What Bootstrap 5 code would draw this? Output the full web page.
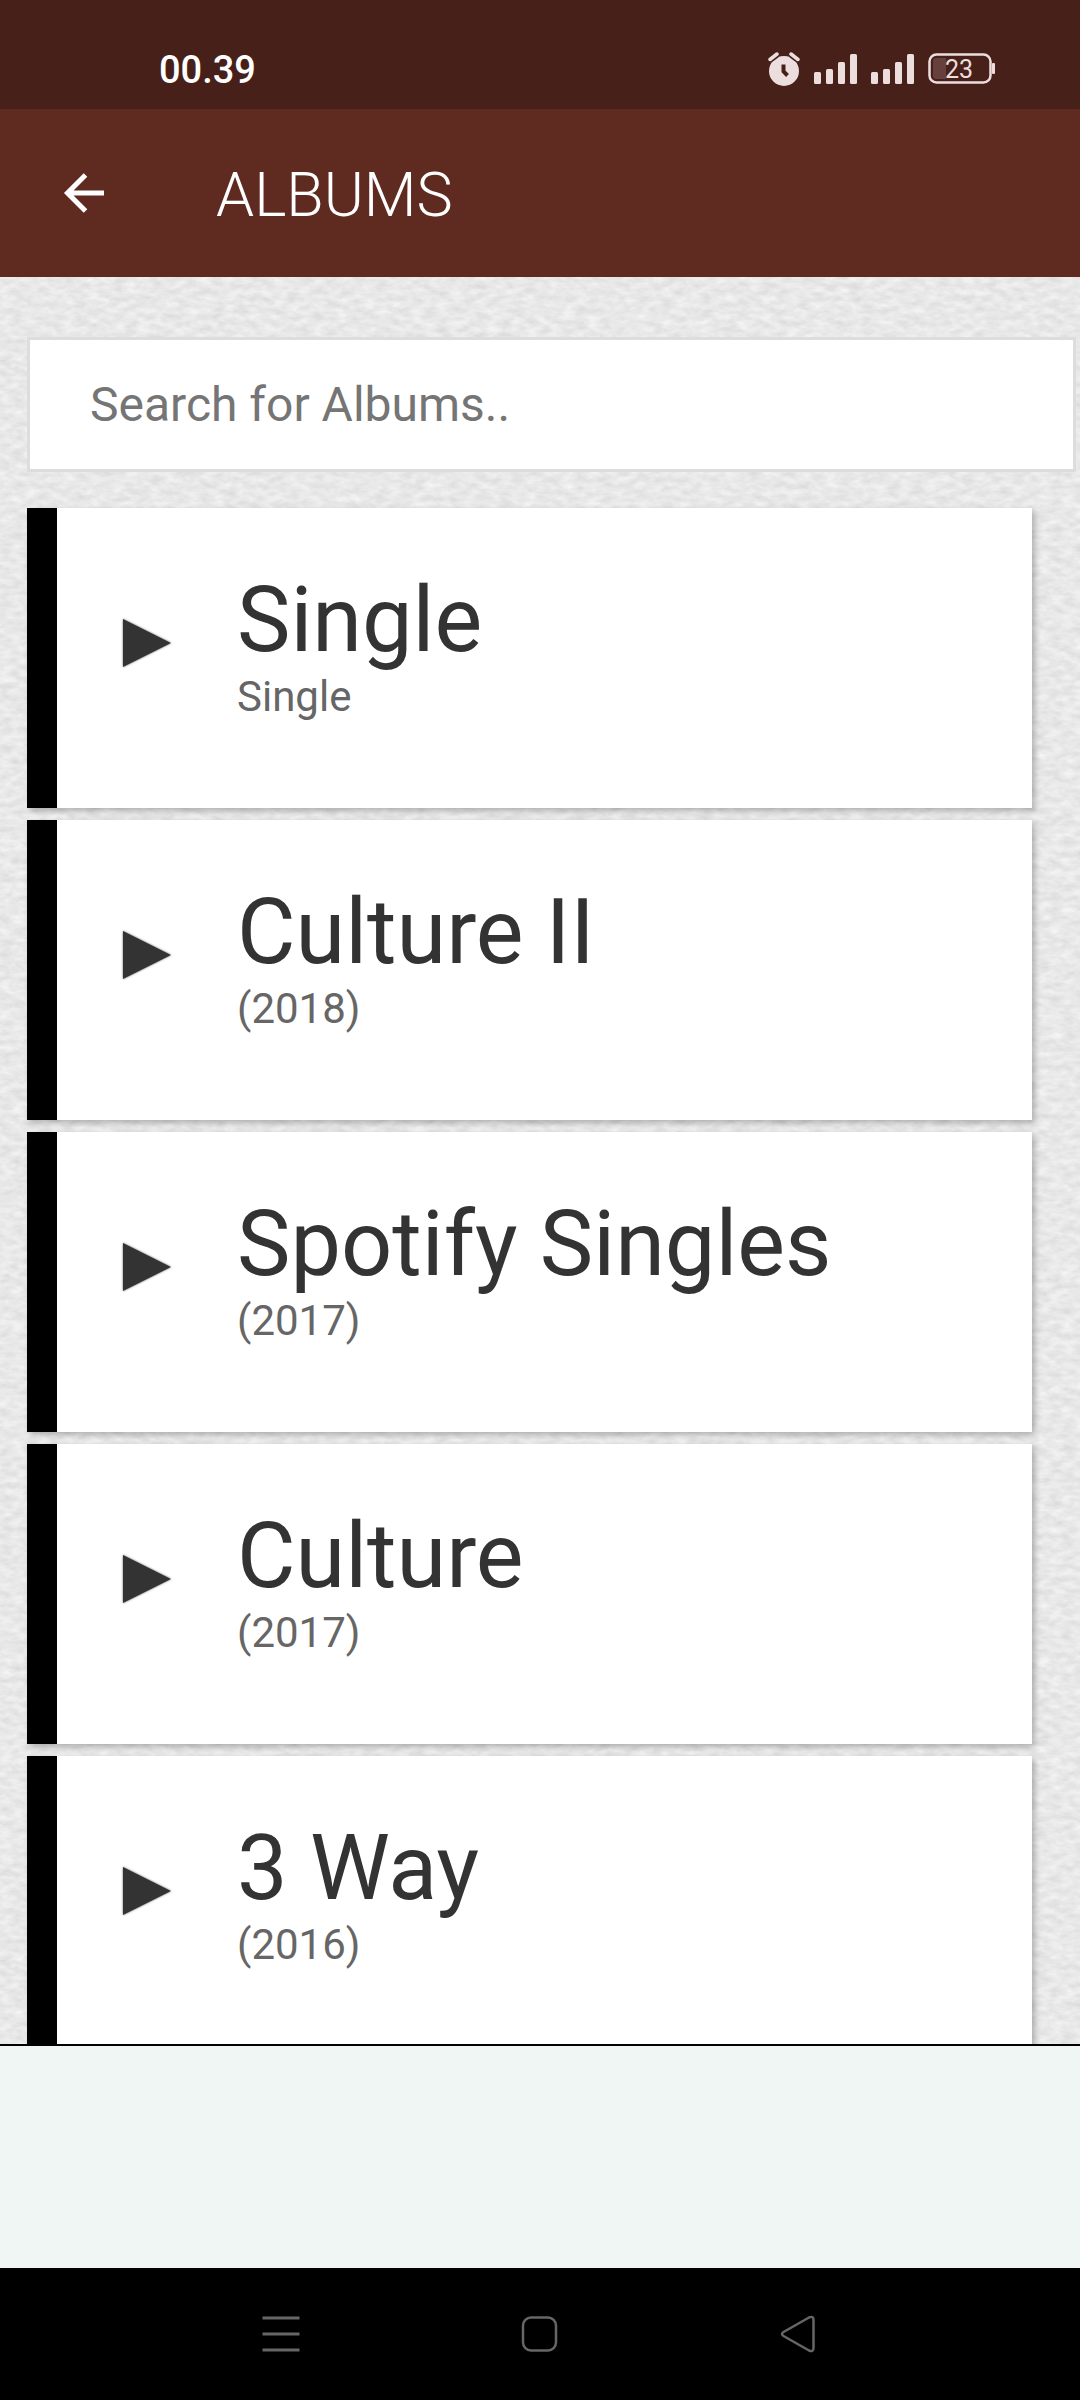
<!DOCTYPE html>
<html lang="en">
<head>
<meta charset="utf-8">
<meta name="viewport" content="width=device-width, initial-scale=1">
<title>Albums</title>
<link href="https://cdn.jsdelivr.net/npm/bootstrap@5.3.0/dist/css/bootstrap.min.css" rel="stylesheet">
<style>
  body { font-family: Roboto, "Liberation Sans", sans-serif; background: #f0f6f4; }
  .status-bar { height: 109px; padding: 28px 84px 0 159px; background: #48201a; }
  .clock { font-size: 38px; line-height: 84px; font-weight: 500; }
  .status-icons { gap: 14px; height: 82px; }
  .app-bar { height: 168px; padding: 0 60px; background: #5f2b20; }
  .back-link { width: 48px; margin-right: 108px; }
  .app-title { font-size: 61px; line-height: 72px; font-weight: 300; padding-top: 3px; }
  .content-area { background: #e7e7e7; border-bottom: 2px solid #000; padding: 60px 4px 0 27px; }
  .paper { z-index: 0; }
  .content-inner { z-index: 1; }
  .search-box { height: 135px; padding: 0 60px; border: 3px solid #ddd; font-size: 48px; color: #333; background: #fff; }
  .search-box::placeholder { color: #757575; opacity: 1; }
  .album-list { gap: 12px; margin-top: 36px; margin-right: 44px; }
  .album-card { min-height: 300px; padding: 61px 60px 87px 66px; gap: 66px; border-left: 30px solid #000; background: #fff; box-shadow: 3px 3px 6px rgba(0,0,0,.25); }
  .album-name { font-size: 90px; line-height: 104px; color: #333; }
  .album-year { font-size: 42px; line-height: 48px; color: #666; }
  .play-icon { margin-top: 50px; filter: drop-shadow(0 0 1px rgba(0,0,0,.6)); }
  .ad-strip { height: 222px; background: #f0f6f4; }
  .system-nav { height: 132px; padding: 0 249px 0 248px; background: #000; }
</style>
<script src="https://cdn.jsdelivr.net/npm/bootstrap@5.3.0/dist/js/bootstrap.bundle.min.js"></script>
</head>
<body class="vh-100 d-flex flex-column overflow-hidden">

<div class="status-bar d-flex justify-content-between flex-shrink-0 text-white">
  <div class="clock">00.39</div>
  <div class="status-icons d-flex align-items-center">
    <svg width="32" height="34" viewBox="0 0 32 34" fill="#ecdedd">
      <circle cx="16" cy="19" r="15"/>
      <path d="M2.500 7 8.500 2.500M23.500 2.500l6 4.500" stroke="#48201a" stroke-width="7"/>
      <path d="M2 7.500 9 2M23 2l7 5.500" stroke="#ecdedd" stroke-width="3.500" stroke-linecap="round"/>
      <path d="M15.500 12.500v7l4 4" fill="none" stroke="#48201a" stroke-width="4"/>
    </svg>
    <svg width="43" height="30" viewBox="0 0 43 30" fill="#ecdedd">
      <rect y="18" width="7" height="12" rx="1.500"/><rect x="12" y="15" width="7" height="15" rx="1.500"/><rect x="24" y="8" width="7" height="22" rx="1.500"/><rect x="36" width="7" height="30" rx="1.500"/>
    </svg>
    <svg width="43" height="30" viewBox="0 0 43 30" fill="#ecdedd">
      <rect y="18" width="7" height="12" rx="1.500"/><rect x="12" y="15" width="7" height="15" rx="1.500"/><rect x="24" y="8" width="7" height="22" rx="1.500"/><rect x="36" width="7" height="30" rx="1.500"/>
    </svg>
    <svg width="68" height="32" viewBox="0 0 68 32" fill="#ecdedd">
      <rect x="1.500" y="1.500" width="61" height="28" rx="7" fill="none" stroke="#ecdedd" stroke-width="2.500"/>
      <path d="M18 5H8q-3 0-3 3v15q0 3 3 3h10z" fill="#66403d"/>
      <rect x="64" y="10" width="3" height="11" rx="1"/>
      <text x="31" y="25" text-anchor="middle" font-size="25" font-weight="400" font-family="Roboto, sans-serif">23</text>
    </svg>
  </div>
</div>

<header class="app-bar d-flex align-items-center flex-shrink-0 text-white">
  <a href="#" class="back-link text-white d-flex" aria-label="Back">
    <svg width="48" height="48" viewBox="0 0 48 48" fill="none" stroke="#fff" stroke-width="5"><path d="M44 24H8M25.500 6 7.500 24l18 18"/></svg>
  </a>
  <h1 class="app-title m-0">ALBUMS</h1>
</header>

<main class="content-area position-relative flex-grow-1 overflow-hidden">
  <!-- paper grain behind the list -->
  <svg class="paper position-absolute top-0 start-0 w-100 h-100" aria-hidden="true">
    <filter id="grain" x="0" y="0" width="100%" height="100%" color-interpolation-filters="sRGB">
      <feTurbulence type="fractalNoise" baseFrequency="0.08 0.16" numOctaves="3" seed="7"/>
      <feColorMatrix values="0.13 0 0 0 0.845  0.13 0 0 0 0.845  0.13 0 0 0 0.845  0 0 0 0 1"/>
    </filter>
    <rect width="100%" height="100%" filter="url(#grain)"/>
  </svg>
  <div class="content-inner position-relative">
    <input type="text" class="search-box d-block w-100" aria-label="Search for Albums" placeholder="Search for Albums..">
    <ul class="album-list list-unstyled d-flex flex-column mb-0">
      <li><a href="#" class="album-card d-flex align-items-start text-decoration-none">
        <svg class="play-icon flex-shrink-0" width="48" height="48" viewBox="0 0 48 48" fill="#333"><path d="M0 0 48 24 0 48z"/></svg>
        <span><span class="album-name d-block">Single</span><span class="album-year d-block">Single</span></span></a></li>
      <li><a href="#" class="album-card d-flex align-items-start text-decoration-none">
        <svg class="play-icon flex-shrink-0" width="48" height="48" viewBox="0 0 48 48" fill="#333"><path d="M0 0 48 24 0 48z"/></svg>
        <span><span class="album-name d-block">Culture II</span><span class="album-year d-block">(2018)</span></span></a></li>
      <li><a href="#" class="album-card d-flex align-items-start text-decoration-none">
        <svg class="play-icon flex-shrink-0" width="48" height="48" viewBox="0 0 48 48" fill="#333"><path d="M0 0 48 24 0 48z"/></svg>
        <span><span class="album-name d-block">Spotify Singles</span><span class="album-year d-block">(2017)</span></span></a></li>
      <li><a href="#" class="album-card d-flex align-items-start text-decoration-none">
        <svg class="play-icon flex-shrink-0" width="48" height="48" viewBox="0 0 48 48" fill="#333"><path d="M0 0 48 24 0 48z"/></svg>
        <span><span class="album-name d-block">Culture</span><span class="album-year d-block">(2017)</span></span></a></li>
      <li><a href="#" class="album-card d-flex align-items-start text-decoration-none">
        <svg class="play-icon flex-shrink-0" width="48" height="48" viewBox="0 0 48 48" fill="#333"><path d="M0 0 48 24 0 48z"/></svg>
        <span><span class="album-name d-block">3 Way</span><span class="album-year d-block">(2016)</span></span></a></li>
    </ul>
  </div>
</main>

<div class="ad-strip flex-shrink-0"></div>

<nav class="system-nav d-flex justify-content-between align-items-center flex-shrink-0" aria-label="System">
  <button type="button" class="btn p-0 border-0 d-flex" aria-label="Recent apps">
    <svg width="66" height="38" viewBox="0 0 66 38" stroke="#666" stroke-width="3"><path d="M14.500 3h37M14.500 19h37M14.500 35h37"/></svg>
  </button>
  <button type="button" class="btn p-0 border-0 d-flex" aria-label="Home">
    <svg width="66" height="38" viewBox="0 0 66 38" fill="none" stroke="#666" stroke-width="2.500"><rect x="16" y="2.500" width="33" height="33" rx="8"/></svg>
  </button>
  <button type="button" class="btn p-0 border-0 d-flex" aria-label="Back">
    <svg width="66" height="38" viewBox="0 0 66 38" fill="none" stroke="#666" stroke-width="2.500" stroke-linejoin="round"><path d="M18.500 17 44 2.500q4.500-2 4.500 2.500v28q0 4.500-4.500 2.500L18.500 21q-3-2 0-4z"/></svg>
  </button>
</nav>
</body>
</html>
